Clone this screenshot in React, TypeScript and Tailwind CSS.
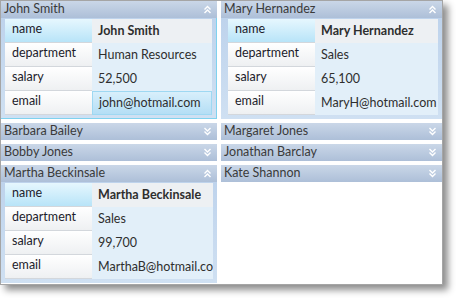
import React from "react";

interface Employee {
  name: string;
  department: string;
  salary: string;
  email: string;
}

const font = { fontFamily: 'Lato, "Noto Sans", sans-serif' };

const Chevrons = ({ up }: { up: boolean }) => (
  <svg width="9" height="9" viewBox="0 0 9 9" className="shrink-0">
    {up ? (
      <>
        <path d="M1.5 4.5 L4.5 1.5 L7.5 4.5" fill="none" stroke="white" strokeWidth="1.4" />
        <path d="M1.5 8 L4.5 5 L7.5 8" fill="none" stroke="white" strokeWidth="1.4" />
      </>
    ) : (
      <>
        <path d="M1.5 1 L4.5 4 L7.5 1" fill="none" stroke="white" strokeWidth="1.4" />
        <path d="M1.5 4.5 L4.5 7.5 L7.5 4.5" fill="none" stroke="white" strokeWidth="1.4" />
      </>
    )}
  </svg>
);

const Header = ({ title, up }: { title: string; up: boolean }) => (
  <div className="h-[17px] shrink-0 flex items-center justify-between pl-[3px] pr-[5px] bg-gradient-to-b from-[#cad7e8] to-[#adbfd8] text-[12.5px] leading-none text-[#3a3a3a]">
    <span className="-mt-px">{title}</span>
    <Chevrons up={up} />
  </div>
);

const Row = ({
  label,
  value,
  first,
  hot,
}: {
  label: string;
  value: string;
  first?: boolean;
  hot?: boolean;
}) => (
  <div className="flex h-[24px]">
    <div
      className={`w-[87px] shrink-0 pl-[7px] pt-[3px] text-[12.5px] leading-[14px] text-[#1c1c2c] border-b border-[#d3d7dc] ${
        first
          ? "bg-gradient-to-b from-[#e6f7fe] to-[#b8e4f8]"
          : "bg-gradient-to-b from-white to-[#eef0f2]"
      }`}
    >
      {label}
    </div>
    <div
      className={`flex-1 min-w-0 pl-[6px] flex items-center overflow-hidden whitespace-nowrap text-[12.5px] text-[#2e2e2e] ${
        first
          ? "font-bold bg-[#edf0f3]"
          : hot
          ? "bg-gradient-to-b from-[#d8effb] to-[#b4def5] border border-[#9ed8f2]"
          : "bg-[#e2eff9]"
      }`}
    >
      {value}
    </div>
  </div>
);

const Panel = ({
  emp,
  active,
  padLeft,
}: {
  emp: Employee;
  active?: boolean;
  padLeft: string;
}) => (
  <div className="h-[118px] flex flex-col shrink-0">
    <Header title={emp.name} up />
    <div
      className={`flex-1 pt-px pr-[4px] ${padLeft} bg-gradient-to-b from-[#bed3ec] to-[#cfe0f2] ${
        active ? "border-r border-b border-[#7fd2ef]" : ""
      }`}
    >
      <div className="bg-gradient-to-b from-[#eef2f6] to-[#dcecf8]">
        <Row label="name" value={emp.name} first />
        <Row label="department" value={emp.department} />
        <Row label="salary" value={emp.salary} />
        <Row label="email" value={emp.email} hot={active} />
      </div>
    </div>
  </div>
);

export default function App() {
  const john: Employee = {
    name: "John Smith",
    department: "Human Resources",
    salary: "52,500",
    email: "john@hotmail.com",
  };
  const mary: Employee = {
    name: "Mary Hernandez",
    department: "Sales",
    salary: "65,100",
    email: "MaryH@hotmail.com",
  };
  const martha: Employee = {
    name: "Martha Beckinsale",
    department: "Sales",
    salary: "99,700",
    email: "MarthaB@hotmail.com",
  };

  return (
    <div className="w-[463px] h-[305px] bg-white" style={font}>
      <div className="w-[443px] h-[285px] border border-[#a5a5a5] bg-white flex gap-[4px] shadow-[5px_5px_7px_rgba(0,0,0,0.45)]">
        <div className="w-[216px] flex flex-col gap-[4px]">
          <Panel emp={john} active padLeft="pl-[4px]" />
          <Header title="Barbara Bailey" up={false} />
          <Header title="Bobby Jones" up={false} />
          <Panel emp={martha} padLeft="pl-[4px]" />
        </div>
        <div className="flex-1 flex flex-col gap-[4px]">
          <Panel emp={mary} padLeft="pl-[7px]" />
          <Header title="Margaret Jones" up={false} />
          <Header title="Jonathan Barclay" up={false} />
          <Header title="Kate Shannon" up={false} />
        </div>
      </div>
    </div>
  );
}
